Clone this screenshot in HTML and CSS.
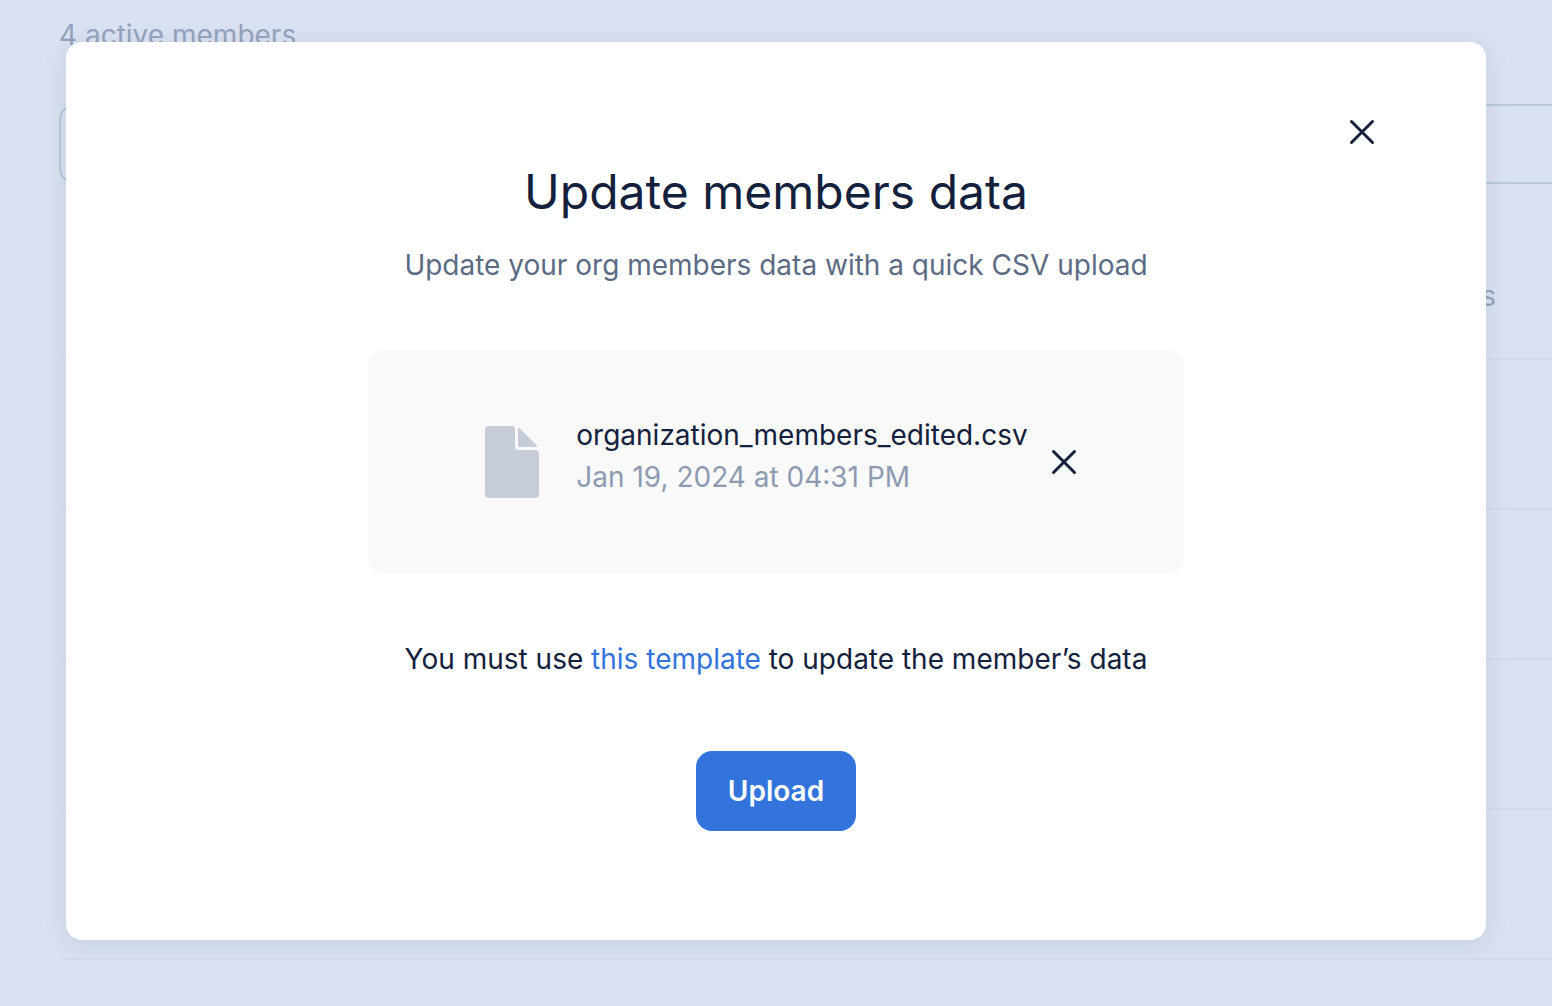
FILE: index.html
```html
<!DOCTYPE html>
<html lang="en">
<head>
<meta charset="utf-8">
<meta name="viewport" content="width=device-width, initial-scale=1">
<title>Update members data</title>
<link rel="stylesheet" href="styles.css">
</head>
<body>
<main class="members">
  <p class="members-count">4 active members</p>
  <input class="members-search" type="text" aria-label="Members">
  <table class="members-table">
    <thead><tr><th scope="col">s</th></tr></thead>
    <tbody>
      <tr><td></td></tr>
      <tr><td></td></tr>
      <tr><td></td></tr>
      <tr><td></td></tr>
    </tbody>
  </table>
</main>
<div class="overlay">
  <section class="dialog" role="dialog" aria-modal="true" aria-labelledby="dialog-title">
    <header class="dialog-bar">
      <button class="icon-button" type="button" aria-label="Close">
        <svg class="cross" viewBox="0 0 24 24" aria-hidden="true"><path d="M1.5 1.5l21 21M22.5 1.5l-21 21"/></svg>
      </button>
    </header>
    <h1 class="dialog-title" id="dialog-title">Update members data</h1>
    <p class="dialog-subtitle">Update your org members data with a quick CSV upload</p>
    <div class="file-card">
      <svg class="file-icon" viewBox="-9 0 72 72" aria-hidden="true">
        <path d="M4 0h22.500a3.500 3.500 0 0 1 3.500 3.500V20.500a3.500 3.500 0 0 0 3.500 3.500H50a4 4 0 0 1 4 4v40a4 4 0 0 1-4 4H4a4 4 0 0 1-4-4V4a4 4 0 0 1 4-4z"/>
        <path d="M33 3.200c0-1.300 1-1.600 1.900-.8L51.500 18.900c1 1 .6 2.100-.7 2.100H34.500A1.500 1.500 0 0 1 33 19.500z"/>
      </svg>
      <div class="file-info">
        <p class="file-name">organization_members_edited.csv</p>
        <p class="file-date">Jan 19, 2024 at 04:31 PM</p>
      </div>
      <button class="icon-button icon-button-compact" type="button" aria-label="Remove file">
        <svg class="cross" viewBox="0 0 24 24" aria-hidden="true"><path d="M1.5 1.5l21 21M22.5 1.5l-21 21"/></svg>
      </button>
    </div>
    <p class="template-note">You must use <a href="#">this template</a> to update the member’s data</p>
    <button class="upload-button" type="button">Upload</button>
  </section>
</div>
</body>
</html>
```

FILE: styles.css
```css
* {
  box-sizing: border-box;
}

body {
  margin: 0;
  min-height: 100vh;
  background: #dae1f0;
  color: #14213d;
  font: 400 28px/42px Inter, "Liberation Sans", sans-serif;
  position: relative;
  overflow: hidden;
}

p,
h1 {
  margin: 0;
}

button {
  border: 0;
  padding: 0;
  font: inherit;
  cursor: pointer;
}

/* Members page behind the dialog */
.members {
  padding: 14px 0 0 59px;
  color: #94a3be;
}

.members-count {
  margin-bottom: 48px;
}

.members-search {
  display: block;
  width: calc(100% + 24px);
  height: 80px;
  margin-bottom: 50px;
  border: 2px solid #bcc7dd;
  border-radius: 16px;
  background: transparent;
}

.members-table {
  width: 100%;
  border-collapse: separate;
  border-spacing: 0;
}

.members-table th,
.members-table td {
  padding: 0 56px 0 0;
  border-bottom: 2px solid #d4daea;
  font-weight: 400;
  text-align: right;
}

.members-table th {
  height: 126px;
}

.members-table td {
  height: 150px;
}

/* Dialog */
.overlay {
  position: absolute;
  inset: 0;
  padding: 42px 66px;
}

.dialog {
  display: flex;
  flex-direction: column;
  align-items: center;
  padding: 66px 100px 109px;
  border-radius: 16px;
  background: #fff;
  box-shadow: 0 4px 24px rgba(20, 50, 60, 0.1);
}

.dialog-bar {
  display: flex;
  justify-content: flex-end;
  width: 100%;
}

.icon-button {
  display: flex;
  align-items: center;
  justify-content: center;
  width: 48px;
  height: 48px;
  background: transparent;
  color: #14213d;
}

.icon-button-compact {
  width: 24px;
}

.cross {
  width: 24px;
  height: 24px;
  fill: none;
  stroke: currentColor;
  stroke-width: 3;
  stroke-linecap: round;
  overflow: visible;
}

.dialog-title {
  margin-top: 4px;
  font-size: 48px;
  font-weight: 400;
  line-height: 64px;
}

.dialog-subtitle {
  margin-top: 20px;
  color: #5c6b84;
}

.file-card {
  display: flex;
  align-items: center;
  justify-content: center;
  width: 100%;
  max-width: 816px;
  min-height: 224px;
  margin-top: 64px;
  border-radius: 16px;
  background: #f9f9f9;
}

.file-icon {
  width: 72px;
  height: 72px;
  margin-right: 28px;
  fill: #c6cdd8;
}

.file-info {
  margin-right: 24px;
  padding-bottom: 12px;
}

.file-date {
  color: #8d9bb1;
}

.template-note {
  margin-top: 64px;
}

.template-note a {
  color: #3273dc;
  text-decoration: none;
}

.upload-button {
  height: 80px;
  margin-top: 71px;
  padding: 0 32px;
  border-radius: 16px;
  background: #3273dc;
  color: #fff;
  font-weight: 600;
}
```
